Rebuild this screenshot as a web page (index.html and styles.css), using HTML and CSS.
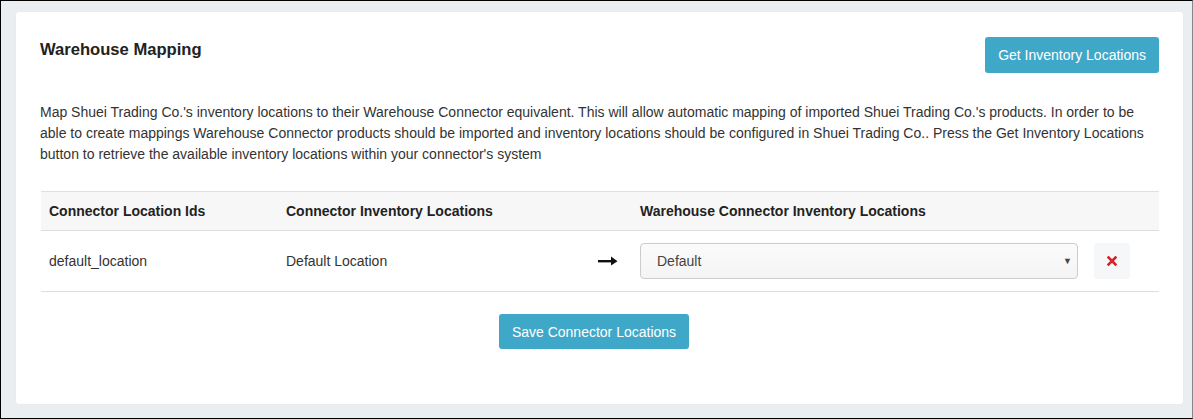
FILE: index.html
```html
<!DOCTYPE html>
<html>
<head>
<meta charset="utf-8">
<link rel="stylesheet" href="styles.css">
</head>
<body>
<div class="frame">
  <div class="card">
    <div class="card-head">
      <h2 class="title">Warehouse Mapping</h2>
      <button class="btn btn-info">Get Inventory Locations</button>
    </div>
    <p class="desc">Map Shuei Trading Co.'s inventory locations to their Warehouse Connector equivalent. This will allow automatic mapping of imported Shuei Trading Co.'s products. In order to be able to create mappings Warehouse Connector products should be imported and inventory locations should be configured in Shuei Trading Co.. Press the Get Inventory Locations button to retrieve the available inventory locations within your connector's system</p>
    <table class="map-table">
      <colgroup>
        <col class="c1"><col class="c2"><col class="c3"><col class="c4"><col class="c5">
      </colgroup>
      <thead>
        <tr>
          <th>Connector Location Ids</th>
          <th>Connector Inventory Locations</th>
          <th></th>
          <th>Warehouse Connector Inventory Locations</th>
          <th></th>
        </tr>
      </thead>
      <tbody>
        <tr>
          <td>default_location</td>
          <td>Default Location</td>
          <td class="arrow-cell">
            <svg class="arrow" width="20" height="10" viewBox="0 0 20 10"><rect x="0" y="4" width="14" height="2.4" fill="#111"/><path d="M13 0.5 L19.5 5.2 L13 9.5 Z" fill="#111"/></svg>
          </td>
          <td>
            <div class="select">
              <span>Default</span>
              <span class="caret">&#9660;</span>
            </div>
          </td>
          <td>
            <button class="btn-remove" aria-label="remove">
              <svg width="10" height="10" viewBox="0 0 10 10"><path d="M1.5 1.5 L8.5 8.5 M8.5 1.5 L1.5 8.5" stroke="#d4232b" stroke-width="2.6" stroke-linecap="square"/></svg>
            </button>
          </td>
        </tr>
      </tbody>
    </table>
    <div class="actions">
      <button class="btn btn-info">Save Connector Locations</button>
    </div>
  </div>
</div>
</body>
</html>
```

FILE: styles.css
```css
html, body {
  margin: 0;
  padding: 0;
}
body {
  font-family: "Liberation Sans", Arial, sans-serif;
  color: #333;
  font-size: 14px;
  background: #eceff1;
}
.frame {
  box-sizing: border-box;
  width: 1193px;
  height: 419px;
  border: 1px solid #000;
  border-right-color: #888;
  background: #ebeef1;
  padding: 11px 9px 0 15px;
}
.card {
  box-sizing: border-box;
  height: 392px;
  background: #fff;
  border-radius: 3px;
  box-shadow: 0 0 1px rgba(0,0,0,0.08);
  padding: 25px 24px 0 24px;
}
.card-head {
  display: flex;
  justify-content: space-between;
  align-items: flex-start;
}
.title {
  margin: 3px 0 0 0;
  font-size: 16.6px;
  font-weight: bold;
  color: #222;
  line-height: 20px;
}
.btn {
  font-family: "Liberation Sans", Arial, sans-serif;
  border: none;
  cursor: pointer;
}
.btn-info {
  background: #3fa8c9;
  color: #fff;
  font-size: 14px;
  height: 36px;
  padding: 0 13px;
  border-radius: 3px;
}
.desc {
  margin: 29px 0 0 0;
  font-size: 14px;
  line-height: 21px;
  color: #333;
}
.map-table {
  margin: 26px 0 0 1px;
  width: 1118px;
  border-collapse: collapse;
  table-layout: fixed;
}
.c1 { width: 237px; }
.c2 { width: 310px; }
.c3 { width: 44px; }
.c4 { width: 454px; }
.c5 { width: 73px; }
.map-table th {
  background: #f7f7f7;
  text-align: left;
  font-weight: bold;
  color: #222;
  font-size: 14px;
  height: 38px;
  padding: 0 8px;
  border-top: 1px solid #e0e0e0;
  border-bottom: 1px solid #dedede;
  white-space: nowrap;
}
.map-table td {
  height: 60px;
  padding: 0 8px;
  border-bottom: 1px solid #dedede;
  font-size: 14px;
  color: #333;
  white-space: nowrap;
}
.arrow-cell {
  text-align: left;
}
.arrow {
  display: block;
  margin-left: 2px;
}
.select {
  box-sizing: border-box;
  width: 438px;
  height: 36px;
  border: 1px solid #ccc;
  border-radius: 4px;
  background: linear-gradient(#fbfbfb, #f4f4f4);
  display: flex;
  align-items: center;
  justify-content: space-between;
  padding: 0 5px 0 16px;
  color: #444;
  font-size: 14px;
}
.caret {
  font-size: 9px;
  color: #444;
}
.btn-remove {
  width: 36px;
  height: 36px;
  border: none;
  background: #f6f7f9;
  border-radius: 3px;
  display: flex;
  align-items: center;
  justify-content: center;
  padding: 0;
}
.actions {
  display: flex;
  justify-content: center;
  margin-top: 22px;
  padding-right: 11px;
}
.actions .btn-info {
  height: 35px;
}
```
